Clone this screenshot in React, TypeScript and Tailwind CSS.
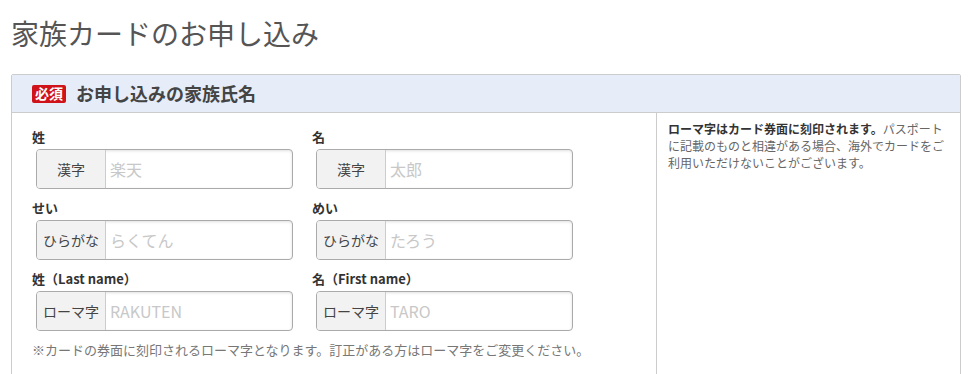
import React from 'react'

const font = { fontFamily: '"Noto Sans CJK JP", "Noto Sans", sans-serif' }

type Field = { label: string; addon: string; placeholder: string }

const rows: [Field, Field][] = [
  [
    { label: '姓', addon: '漢字', placeholder: '楽天' },
    { label: '名', addon: '漢字', placeholder: '太郎' },
  ],
  [
    { label: 'せい', addon: 'ひらがな', placeholder: 'らくてん' },
    { label: 'めい', addon: 'ひらがな', placeholder: 'たろう' },
  ],
  [
    { label: '姓（Last name）', addon: 'ローマ字', placeholder: 'RAKUTEN' },
    { label: '名（First name）', addon: 'ローマ字', placeholder: 'TARO' },
  ],
]

function NameField({ f }: { f: Field }) {
  return (
    <div className="w-[280px]">
      <div className="text-[13px] leading-[19px] font-bold text-[#333] mb-[3px]">{f.label}</div>
      <div className="ml-[4px] flex h-[40px] w-[257px] rounded-[4px] border border-[#aaa] overflow-hidden shadow-[inset_0_1px_3px_rgba(0,0,0,0.12)]">
        <span className="flex w-[69px] shrink-0 items-center justify-center border-r border-[#ccc] bg-[#f2f2f2] text-[14px] text-[#444]">
          {f.addon}
        </span>
        <input
          className="min-w-0 flex-1 bg-transparent px-[4px] text-[16px] text-[#333] outline-none placeholder:text-[#c8c8c8]"
          placeholder={f.placeholder}
        />
      </div>
    </div>
  )
}

export default function App() {
  return (
    <div className="bg-white pl-[11px] pt-[16px] text-[#333]" style={font}>
      <h1 className="text-[28px] leading-[34px] font-normal text-[#555]">家族カードのお申し込み</h1>

      <div className="mt-[24px] w-[950px] rounded-t-[2px] border border-[#ccc]">
        <div className="flex h-[38px] items-center border-b border-[#ccc] bg-[#e6edf8] pl-[20px]">
          <span className="flex h-[18px] w-[34px] items-center justify-center rounded-[2px] bg-[#d0121b] text-[14px] font-bold text-white">
            必須
          </span>
          <span className="ml-[10px] text-[18px] font-bold text-[#444]">お申し込みの家族氏名</span>
        </div>

        <div className="flex">
          <div className="w-[645px] border-r border-[#ccc] pl-[20px] pt-[14px] pb-[24px]">
            <div className="flex flex-col gap-[9px]">
              {rows.map((r, i) => (
                <div key={i} className="flex">
                  <NameField f={r[0]} />
                  <NameField f={r[1]} />
                </div>
              ))}
            </div>
            <p className="mt-[9px] text-[13px] leading-[19px] text-[#777]">
              ※カードの券面に刻印されるローマ字となります。訂正がある方はローマ字をご変更ください。
            </p>
          </div>
          <div className="flex-1 px-[11px] pt-[7px] text-[12px] leading-[17px] text-[#666]">
            <span className="font-bold text-[#333]">ローマ字はカード券面に刻印されます。</span>
            パスポートに記載のものと相違がある場合、海外でカードをご利用いただけないことがございます。
          </div>
        </div>
      </div>
    </div>
  )
}
